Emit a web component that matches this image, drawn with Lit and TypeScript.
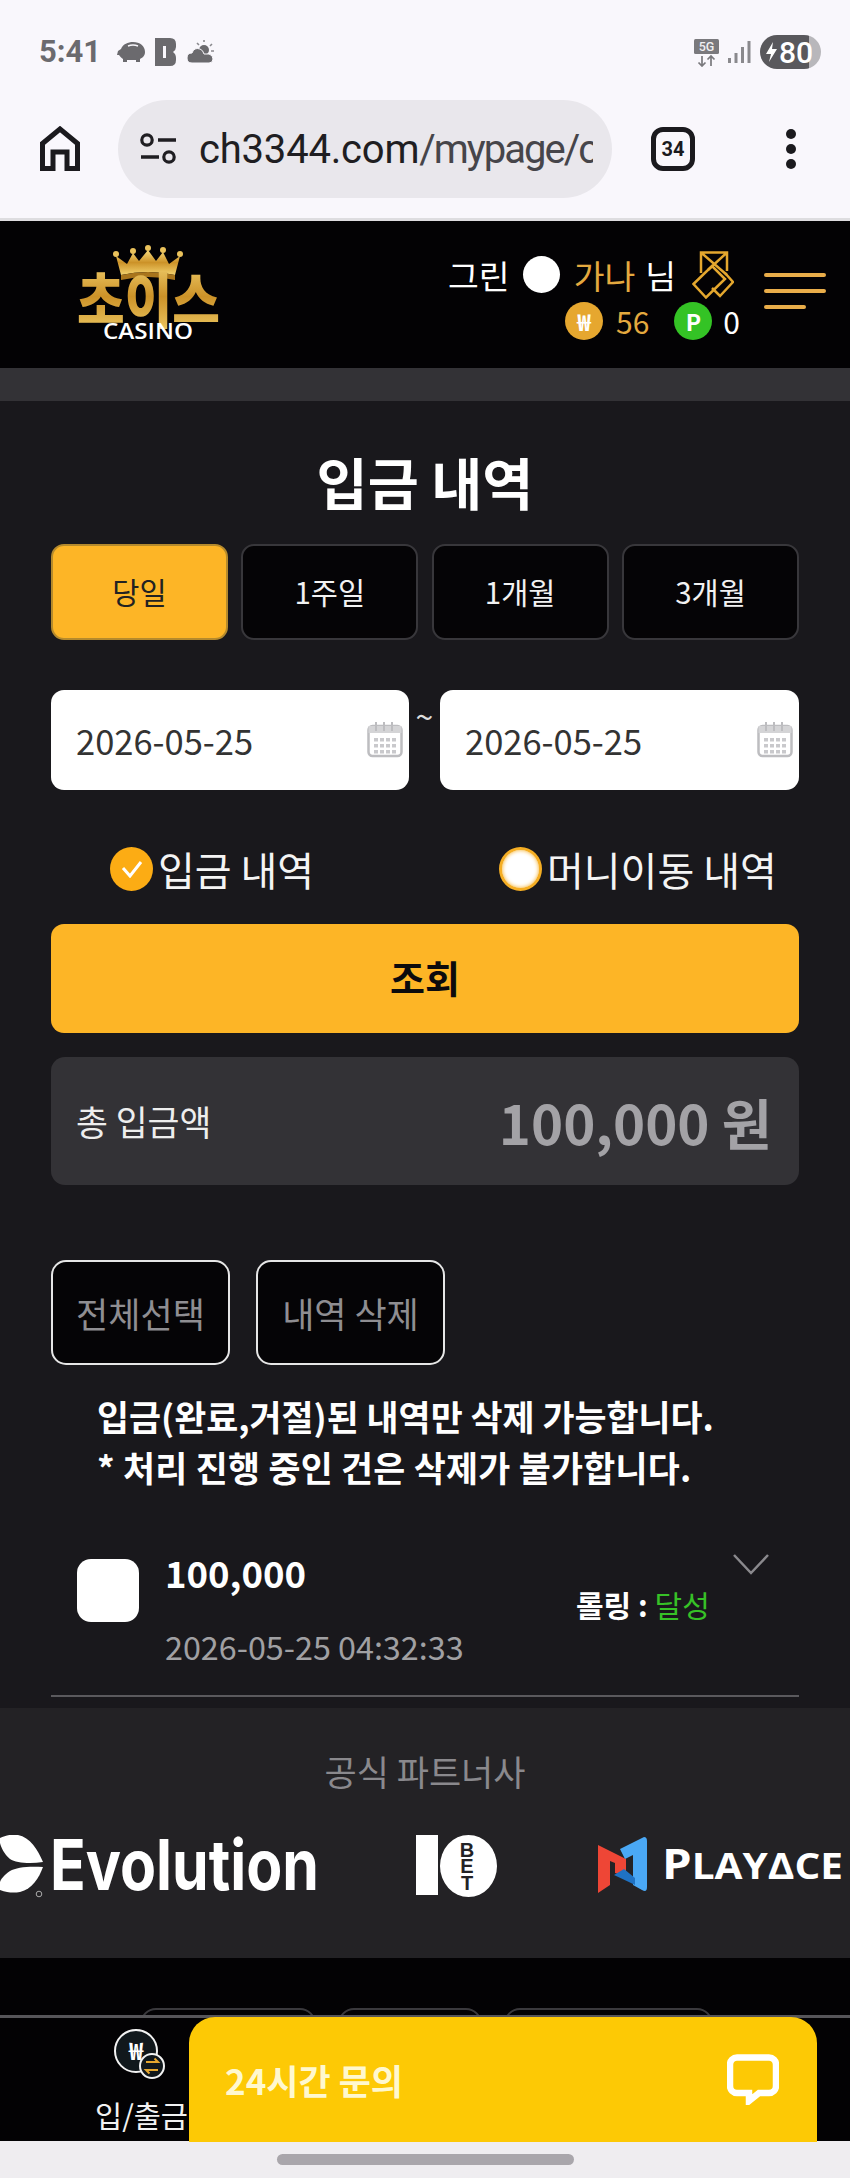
import { LitElement, html, css, svg } from "lit";
import { customElement } from "lit/decorators.js";

const KR = `"Noto Sans CJK KR", "Noto Sans", sans-serif`;

@customElement("app-root")
export class AppRoot extends LitElement {
  static styles = css`
    :host { display: block; width: 850px; height: 2178px; overflow: hidden; font-family: "Noto Sans CJK KR", "Noto Sans", sans-serif; background: #19181c; color: #fff; }
    * { box-sizing: border-box; }
    svg { display: block; flex: none; }

    .browser { height: 221px; background: #f9f7fc; border-bottom: 3px solid #dedde0; font-family: Roboto, sans-serif; }
    .status { height: 100px; padding: 35px 29px 0 39px; display: flex; align-items: flex-start; }
    .time { font-size: 31px; font-weight: 700; line-height: 34px; color: #6b6a6e; margin-right: 16px; }
    .status-icons { display: flex; align-items: center; gap: 10px; height: 34px; }
    .status-right { margin-left: auto; display: flex; align-items: center; height: 34px; gap: 9px; }
    .battery { width: 61px; height: 34px; border-radius: 17px; background: linear-gradient(90deg, #59585c 80%, #b8b7bb 80%); display: flex; align-items: center; padding-left: 6px; gap: 2px; color: #fff; font-size: 30px; font-weight: 500; }
    .toolbar { display: flex; align-items: center; height: 98px; padding-left: 38px; }
    .url { margin-left: 36px; width: 494px; height: 98px; border-radius: 49px; background: #e9e7ec; display: flex; align-items: center; padding: 0 19px 0 22px; gap: 22px; }
    .url-text { flex: 1; min-width: 0; overflow: hidden; white-space: nowrap; font-size: 40px; color: #1f1e22; letter-spacing: -0.2px; }
    .url-text span { color: #46454a; letter-spacing: -2px; }
    .tabcount { margin-left: 39px; width: 44px; height: 44px; border: 5px solid #1b1a1e; border-radius: 12px; display: flex; align-items: center; justify-content: center; font-size: 20px; font-weight: 700; color: #1b1a1e; }
    .dots { margin-left: 91px; display: flex; flex-direction: column; gap: 5px; }
    .dots i { width: 10px; height: 10px; border-radius: 50%; background: #1b1a1e; display: block; }

    .header { height: 147px; background: #030204; display: flex; padding: 24px 24px 0 75px; align-items: flex-start; }
    .logo { overflow: visible; }
    .user { margin-left: auto; width: 290px; display: flex; flex-direction: column; align-items: flex-end; padding-top: 5px; }
    .user-top { display: flex; align-items: center; height: 49px; font-size: 33.5px; line-height: 49px; width: 290px; margin-right: 3px; padding-left: 3px; white-space: nowrap; }
    .user-top span { flex: none; }
    .dot { width: 37px; height: 37px; border-radius: 50%; background: #fff; margin: 0 14px 0 13px; }
    .gold { color: #e4a93f; }
    .nim { margin-left: 10px; margin-right: 15.5px; }
    .user-bottom { display: flex; align-items: center; height: 40px; font-size: 30px; margin-top: 2px; margin-right: -2px; }
    .coin { width: 38px; height: 38px; border-radius: 50%; display: flex; align-items: center; justify-content: center; font-size: 23px; font-weight: 700; color: #fff; }
    .coin.won { background: #e6a72f; margin-right: 13px; }
    .coin.pt { background: #34c325; margin: 0 11px 0 25px; }
    .burger { margin-left: 26px; padding-top: 28px; display: flex; flex-direction: column; gap: 12px; width: 62px; }
    .burger i { display: block; height: 4px; width: 62px; background: #e9ad4a; border-radius: 2px; }
    .burger i:last-child { width: 42px; }

    .stripe { height: 33px; background: #333236; }
    .content { height: 1307px; padding: 0 51px; background: #19181c; }
    h1 { margin: 0; padding-top: 45px; height: 143px; font-size: 55.5px; line-height: 70px; font-weight: 700; text-align: center; }
    .tabs { display: grid; grid-template-columns: repeat(4, 1fr); gap: 13.33px; height: 96px; }
    .tab { background: #050406; border: 2px solid #38373b; border-radius: 13px; display: flex; align-items: center; justify-content: center; padding-bottom: 3px; font-size: 29.5px; color: #f2f2f2; }
    .tab.on { background: #fdb526; border-color: #b58a2c; color: #222; }
    .dates { margin-top: 50px; display: grid; grid-template-columns: 358px 1fr 359px; height: 100px; }
    .date { background: #fff; border-radius: 13px; display: flex; align-items: center; justify-content: space-between; padding: 0 6px 0 25px; color: #333; font-size: 34.5px; }
    .tilde { text-align: center; font-size: 32px; line-height: 50px; color: #ddd; }
    .radios { margin-top: 57px; display: grid; grid-template-columns: 389px 1fr; padding-left: 59px; height: 44px; }
    .radio { display: flex; align-items: center; gap: 5px; font-size: 40px; line-height: 44px; white-space: nowrap; color: #f4f4f4; }
    .mark { width: 43px; height: 44px; border-radius: 50%; background: #fcac14; display: flex; align-items: center; justify-content: center; flex: none; }
    .mark.off { background: #fff; border: 3px solid #f5ae24; box-shadow: inset 0 0 4px #f5ae24; }
    .search { margin-top: 33px; height: 109px; border-radius: 13px; background: #fdb526; color: #0c0b0d; display: flex; align-items: center; justify-content: center; padding-bottom: 4px; font-size: 38px; font-weight: 700; }
    .total { margin-top: 24px; height: 128px; border-radius: 14px; background: #333236; display: flex; align-items: center; justify-content: space-between; padding: 0 27px 0 25px; }
    .total .l { font-size: 34.7px; color: #eee; }
    .total .v { font-size: 54.5px; font-weight: 700; color: #a3a2a6; }
    .actions { margin-top: 75px; display: flex; gap: 26px; }
    .act { height: 105px; background: #050406; border: 2px solid #e6e6e6; border-radius: 15px; display: flex; align-items: center; justify-content: center; font-size: 35px; color: #8f8e92; }
    .act.a { width: 179px; }
    .act.b { width: 189px; }
    .notes { margin-top: 26px; padding-left: 46px; font-size: 34.8px; line-height: 51px; font-weight: 700; white-space: nowrap; }
    .notes .l2 { letter-spacing: 0.25px; }
    .row { margin-top: 52px; height: 152px; border-bottom: 2px solid #5a595d; display: flex; padding-left: 26px; }
    .check { width: 62px; height: 63px; border-radius: 14px; background: #fff; margin-top: 14px; flex: none; }
    .info { margin-left: 26px; width: 411px; }
    .amount { font-size: 36.5px; font-weight: 700; line-height: 56px; }
    .when { font-size: 32.3px; line-height: 46px; color: #a0a0a3; margin-top: 22px; white-space: nowrap; }
    .roll { margin-top: 35px; width: 157px; font-size: 30px; line-height: 48px; font-weight: 700; white-space: nowrap; }
    .roll b { font-weight: 400; color: #37c127; }
    .chev { margin-top: 9px; }

    .partners { height: 250px; background: #232225; }
    .partners h2 { margin: 0; padding-top: 43px; font-size: 35px; line-height: 40px; font-weight: 400; text-align: center; color: #8a898d; }
    .logos { margin-top: 44px; display: flex; align-items: flex-start; }
    .footer { height: 57px; background: #030204; padding: 50px 0 0 140px; overflow: hidden; display: flex; gap: 22px; }
    .pill { height: 60px; border: 2px solid #3a393d; border-radius: 16px; }
    .nav { height: 126px; background: #030204; border-top: 3px solid #565559; display: flex; }
    .wallet { width: 189px; padding-left: 95px; display: flex; flex-direction: column; align-items: flex-start; white-space: nowrap; }
    .wallet svg { margin: 11px 0 0 19px; }
    .wallet span { font-size: 29.5px; line-height: 40px; color: #f2f2f2; margin-top: 3px; }
    .ask { width: 628px; height: 125px; margin-top: -1px; background: #fdc905; border-radius: 26px 26px 0 0; display: flex; align-items: center; justify-content: space-between; padding: 0 38px 0 36px; font-size: 35px; font-weight: 700; color: #fff8cf; }
    .bottom { height: 37px; background: #efedf0; display: flex; justify-content: center; padding-top: 13px; }
    .handle { width: 297px; height: 11px; border-radius: 6px; background: #a9a6ab; }
  `;

  private calendar() {
    const cells = [];
    for (const y of [16, 22, 28]) for (const x of [7, 13, 19, 25]) cells.push(svg`<rect x=${x} y=${y} width="4" height="3.5" fill="#c9c9cc"/>`);
    return html`<svg width="36" height="36" viewBox="0 0 36 36">
      <rect x="1.5" y="4" width="33" height="30" rx="4" fill="#fff" stroke="#bdbdc0" stroke-width="2.5"/>
      <rect x="1.5" y="4" width="33" height="7" fill="#d4d4d6"/>
      ${[8, 16, 24].map(x => svg`<rect x=${x} y="0" width="2" height="9" fill="#bdbdc0"/>`)}
      ${cells}
    </svg>`;
  }

  private logo() {
    return html`<svg class="logo" width="150" height="96" viewBox="0 0 150 96">
      <defs>
        <linearGradient id="g" x1="0" y1="0" x2="0" y2="1">
          <stop offset="0" stop-color="#f9dc7c"/><stop offset=".5" stop-color="#cc9228"/><stop offset="1" stop-color="#f3d26e"/>
        </linearGradient>
      </defs>
      <path d="M46 30 L41 11 L52 19 L58 8 L64 16 L73 5 L81 16 L88 7 L94 19 L105 11 L100 30 Q73 24 46 30Z" fill="url(#g)"/>
      <path d="M46 30 Q73 24 100 30 L100 35 Q73 29 46 35Z" fill="#a8741c"/>
      ${[[41, 9], [58, 6], [73, 3], [88, 5], [105, 9]].map(([x, y]) => svg`<circle cx=${x} cy=${y} r="3" fill="#eac25c"/>`)}
      <text x="2" y="78" textLength="143" lengthAdjust="spacingAndGlyphs" font-size="60" font-weight="900" fill="url(#g)" font-family=${KR}>초이스</text>
      <text x="28" y="94" textLength="90" lengthAdjust="spacingAndGlyphs" font-size="22" font-weight="600" fill="#fff" font-family="'Open Sans', sans-serif">CASINO</text>
    </svg>`;
  }

  private evolution() {
    return html`<svg width="416" height="64" viewBox="0 0 416 64">
      <path d="M0 3C6 0 13-1 18 0C30 2 38 15 43 27C30 29 16 28 10 24C4 19 1 12 0 8Z" fill="#fff"/>
      <path d="M43 32C30 31 16 32 10 36C4 40 1 44 0 47V55C8 58 14 58 20 57C32 54 39 43 43 32Z" fill="#fff"/>
      <circle cx="39" cy="59" r="2.8" fill="none" stroke="#aaa" stroke-width="1"/>
      <text x="50" y="55" textLength="269" lengthAdjust="spacingAndGlyphs" font-size="70" font-weight="700" fill="#fff" font-family="Inter, sans-serif">Evolution</text>
    </svg>`;
  }

  private tenbet() {
    return html`<svg width="182" height="64" viewBox="0 0 182 64">
      <rect x="0" y="0" width="22" height="60" fill="#fff"/>
      <ellipse cx="52.5" cy="31" rx="28.5" ry="31" fill="#fff"/>
      ${[["B", 22], ["E", 38], ["T", 55]].map(([t, y]) => svg`<text x="51" y=${y} text-anchor="middle" font-size="20" font-weight="700" fill="#232225" font-family="'Liberation Sans', sans-serif">${t}</text>`)}
    </svg>`;
  }

  private playace() {
    return html`<svg width="252" height="64" viewBox="0 0 252 64">
      <path d="M0 10L28 24V41L17 38V28L12 26V50L0 58Z" fill="#ee4636"/>
      <path d="M46 2Q49 2 49 6V52Q49 58 44 55L35 50V20L27 24L22 14Z" fill="#4aa8f5"/>
      <path d="M16 40L26 34L37 43V50L33 48Z" fill="#1f72c4"/>
      <text x="64" y="44" textLength="181" lengthAdjust="spacingAndGlyphs" font-weight="700" fill="#fff" font-family="'Open Sans', sans-serif"><tspan font-size="42">P</tspan><tspan font-size="36">LAYΔCE</tspan></text>
    </svg>`;
  }

  render() {
    return html`
      <div class="browser">
        <div class="status">
          <span class="time">5:41</span>
          <div class="status-icons">
            <svg width="28" height="20" viewBox="0 0 28 20"><path d="M1 9L4 7C6 2 11 0 16 0C23 0 28 4 28 10C28 14 25 16 23 17V20H19V18H10V20H6V17C4 16 3 14 2 13H0Z" fill="#6b6a6e"/><path d="M11 4Q16 2 21 4" stroke="#f9f7fc" stroke-width="1.4" fill="none"/></svg>
            <svg width="22" height="28" viewBox="0 0 22 28"><path d="M0 0H15Q21 0 21 6V9Q21 12 18 14Q21 16 21 20V22Q21 28 15 28H0Z" fill="#6b6a6e"/><rect x="8" y="8" width="3" height="12" fill="#f9f7fc"/></svg>
            <svg width="27" height="24" viewBox="0 0 27 24"><circle cx="17" cy="10" r="5" fill="#6b6a6e"/><path d="M17 0V2M25 4L23 6M27 11H24M10 3L12 5" stroke="#8a898d" stroke-width="1.6"/><path d="M5 23Q0 23 0 18Q0 13 5 13Q7 7 13 9Q16 10 17 14H22Q26 15 26 19Q26 23 22 23Z" fill="#6b6a6e" stroke="#f9f7fc" stroke-width="1"/></svg>
          </div>
          <div class="status-right">
            <svg width="25" height="30" viewBox="0 0 25 30"><rect x="0" y="2" width="25" height="15" rx="1.5" fill="#7a797d"/><text x="12.5" y="14" text-anchor="middle" font-size="12.5" font-weight="500" fill="#f0eff2" font-family="Roboto, sans-serif">5G</text><path d="M8 19V29M4.5 25.5L8 29L11.5 25.5M17 29V19M13.5 22.5L17 19L20.5 22.5" stroke="#7a797d" stroke-width="1.7" fill="none"/></svg>
            <svg width="23" height="22" viewBox="0 0 23 22"><rect x="0" y="17" width="3" height="5" fill="#8a898d"/><rect x="6.5" y="12" width="3" height="10" fill="#8a898d"/><rect x="13" y="6" width="3" height="16" fill="#8a898d"/><rect x="19.5" y="0" width="3" height="22" fill="#8a898d"/></svg>
            <div class="battery">
              <svg width="11" height="20" viewBox="0 0 11 20"><path d="M7 0L0 12H5L3 20L11 7H6Z" fill="#fff"/></svg>
              <span>80</span>
            </div>
          </div>
        </div>
        <div class="toolbar">
          <svg width="44" height="46" viewBox="0 0 44 46"><path d="M4.500 42.500V17.500L22 3L39.500 17.500V42.500H29V26H15V42.500Z" fill="none" stroke="#1b1a1e" stroke-width="5"/></svg>
          <div class="url">
            <svg width="37" height="32" viewBox="0 0 37 32"><circle cx="7" cy="7" r="5.200" fill="none" stroke="#1f1e22" stroke-width="3.200"/><path d="M18 7H36M1 24H19" stroke="#1f1e22" stroke-width="3.600"/><circle cx="29" cy="24" r="5.200" fill="none" stroke="#1f1e22" stroke-width="3.200"/></svg>
            <div class="url-text">ch3344.com<span>/mypage/c</span></div>
          </div>
          <div class="tabcount">34</div>
          <div class="dots"><i></i><i></i><i></i></div>
        </div>
      </div>

      <div class="header">
        ${this.logo()}
        <div class="user">
          <div class="user-top">
            <span>그린</span><span class="dot"></span><span class="gold">가나</span><span class="nim">님</span>
            <svg width="42" height="48" viewBox="0 0 42 48" fill="none" stroke="#e4a72e" stroke-width="2.500"><path d="M9 22V1.500H35V20M9 1.500L35 24M35 1.500L16 19"/><path d="M1.500 33L20 15L33 28L14 46.500Z"/><path d="M33 22L41 31L28 45L20 37"/></svg>
          </div>
          <div class="user-bottom">
            <span class="coin won">₩</span><span class="gold">56</span>
            <span class="coin pt">P</span><span>0</span>
          </div>
        </div>
        <div class="burger"><i></i><i></i><i></i></div>
      </div>
      <div class="stripe"></div>

      <div class="content">
        <h1>입금 내역</h1>
        <div class="tabs">
          <div class="tab on">당일</div><div class="tab">1주일</div><div class="tab">1개월</div><div class="tab">3개월</div>
        </div>
        <div class="dates">
          <div class="date"><span>2026-05-25</span>${this.calendar()}</div>
          <div class="tilde">~</div>
          <div class="date"><span>2026-05-25</span>${this.calendar()}</div>
        </div>
        <div class="radios">
          <div class="radio"><span class="mark"><svg width="24" height="18" viewBox="0 0 24 18"><path d="M3 8L10 16L21 2" fill="none" stroke="#fff" stroke-width="3"/></svg></span>입금 내역</div>
          <div class="radio"><span class="mark off"></span>머니이동 내역</div>
        </div>
        <div class="search">조회</div>
        <div class="total"><span class="l">총 입금액</span><span class="v">100,000 원</span></div>
        <div class="actions"><div class="act a">전체선택</div><div class="act b">내역 삭제</div></div>
        <div class="notes">입금(완료,거절)된 내역만 삭제 가능합니다.<br /><span class="l2">* 처리 진행 중인 건은 삭제가 불가합니다.</span></div>
        <div class="row">
          <div class="check"></div>
          <div class="info">
            <div class="amount">100,000</div>
            <div class="when">2026-05-25 04:32:33</div>
          </div>
          <div class="roll">롤링 : <b>달성</b></div>
          <svg class="chev" width="36" height="21" viewBox="0 0 36 21"><path d="M1 1L18 19L35 1" fill="none" stroke="#8a898d" stroke-width="2.500"/></svg>
        </div>
      </div>

      <div class="partners">
        <h2>공식 파트너사</h2>
        <div class="logos">${this.evolution()}${this.tenbet()}${this.playace()}</div>
      </div>
      <div class="footer">
        <div class="pill" style="width:176px"></div>
        <div class="pill" style="width:144px"></div>
        <div class="pill" style="width:209px"></div>
      </div>
      <div class="nav">
        <div class="wallet">
          <svg width="60" height="62" viewBox="0 0 60 62">
            <circle cx="22" cy="22" r="21" fill="#11181c" stroke="#f2f2f2" stroke-width="2"/>
            <text x="22" y="31" text-anchor="middle" font-size="24" font-weight="700" fill="#fff" font-family=${KR}>₩</text>
            <circle cx="38" cy="37" r="12" fill="#11181c" stroke="#f2f2f2" stroke-width="2"/>
            <path d="M32 33H44L40.500 29.500M44 41H32L35.500 44.500" fill="none" stroke="#e6a72f" stroke-width="2"/>
          </svg>
          <span>입/출금</span>
        </div>
        <div class="ask">
          <span>24시간 문의</span>
          <svg width="52" height="51" viewBox="0 0 52 51"><path d="M10 3.500H42A7 7 0 0 1 49 10.500V32A7 7 0 0 1 42 39H32L22 47V39H10A7 7 0 0 1 3 32V10.500A7 7 0 0 1 10 3.500Z" fill="none" stroke="#fff" stroke-width="6.500"/></svg>
        </div>
      </div>
      <div class="bottom"><div class="handle"></div></div>
    `;
  }
}
